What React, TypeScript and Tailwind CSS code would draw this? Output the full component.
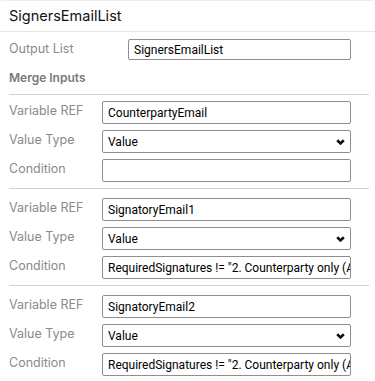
import React from 'react';

const font = { fontFamily: 'Inter, "Liberation Sans", sans-serif' };
const fieldFont = { fontFamily: 'Roboto, "Liberation Sans", sans-serif' };

const Chevron = () => (
  <svg width="9" height="6" viewBox="0 0 9 6" className="absolute right-[5px] top-1/2 -translate-y-1/2 pointer-events-none">
    <path d="M1.2 1.2 L4.5 4.4 L7.8 1.2" fill="none" stroke="#111" strokeWidth="2.6" />
  </svg>
);

const TextBox = ({ value }: { value: string }) => (
  <div className="w-[249px] h-[23px] border border-[#8f8f8f] rounded-[2px] flex items-center pl-[5px] pr-[2px] overflow-hidden whitespace-nowrap text-[12px] text-black" style={fieldFont}>
    {value}
  </div>
);

const SelectBox = ({ value }: { value: string }) => (
  <div className="relative w-[249px] h-[23px] border border-[#8f8f8f] rounded-[2px] flex items-center pl-[5px] text-[12px] text-black" style={fieldFont}>
    {value}
    <Chevron />
  </div>
);

const Row = ({ label, children }: { label: string; children: React.ReactNode }) => (
  <div className="flex items-center h-[23px]">
    <div className="w-[93px] text-[12.5px] text-[#8a8a8a] -mt-[2px]">{label}</div>
    {children}
  </div>
);

const mergeInputs = [
  { ref: 'CounterpartyEmail', type: 'Value', condition: '' },
  { ref: 'SignatoryEmail1', type: 'Value', condition: 'RequiredSignatures != "2. Counterparty only (Approval required)"' },
  { ref: 'SignatoryEmail2', type: 'Value', condition: 'RequiredSignatures != "2. Counterparty only (Approval required)"' },
];

const App = () => {
  return <div className="w-[375px] h-[381px] bg-white overflow-hidden" style={font}>
      <div className="border-t border-[#ececec] rounded-t-[3px]">
        <div className="h-[31px] px-[9px] flex items-center text-[14.5px] text-[#111] border-b border-[#e6e6e6]">
          SignersEmailList
        </div>
        <div className="px-[9px]">
          <div className="flex items-center mt-[7px] h-[21px]">
            <div className="w-[119px] text-[12.5px] text-[#8a8a8a]">Output List</div>
            <div className="w-[223px] h-[21px] border border-[#8f8f8f] rounded-[2px] flex items-center pl-[5px] text-[12px] text-black" style={fieldFont}>
              SignersEmailList
            </div>
          </div>
          <div className="mt-[10px] text-[12px] leading-[16px] font-semibold text-[#7a7a7a]">Merge Inputs</div>
          <div className="w-[360px] mt-[8px]">
            {mergeInputs.map((m, i) => <div key={m.ref} className={`border-t border-[#d0d0d0] flex flex-col gap-[6px] pb-[6px] ${i === 0 ? 'pt-[6px]' : 'pt-[9px]'}`}>
                <Row label="Variable REF"><TextBox value={m.ref} /></Row>
                <Row label="Value Type"><SelectBox value={m.type} /></Row>
                <Row label="Condition"><TextBox value={m.condition} /></Row>
              </div>)}
          </div>
        </div>
      </div>
    </div>;
};
export default App;
